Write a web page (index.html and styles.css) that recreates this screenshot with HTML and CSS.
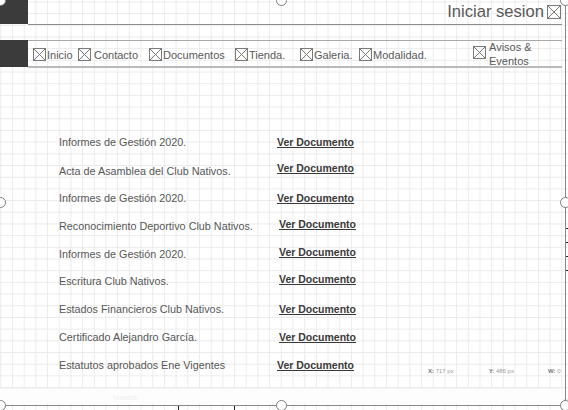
FILE: index.html
```html
<!DOCTYPE html>
<html lang="es">
<head>
<meta charset="utf-8">
<title>Documentos</title>
<link rel="stylesheet" href="styles.css">
</head>
<body>
<div class="stage">
  <div class="page">
    <header class="header">
      <div class="block"></div>
      <div class="header-main">
        <span class="login">Iniciar sesion</span>
        <svg class="ico ico-lg" viewBox="0 0 14 14"><rect x="0.5" y="0.5" width="13" height="13" fill="none" stroke="#7a7a7a"/><path d="M0.5 0.5L13.5 13.5M13.5 0.5L0.5 13.5" stroke="#7a7a7a" fill="none"/></svg>
      </div>
    </header>

    <nav class="nav">
      <div class="block block-nav"></div>
      <div class="nav-main">
        <a class="nav-item"><svg class="ico" viewBox="0 0 13 13"><rect x="0.5" y="0.5" width="12" height="12" fill="none" stroke="#7a7a7a"/><path d="M0.5 0.5L12.5 12.5M12.5 0.5L0.5 12.5" stroke="#7a7a7a" fill="none"/></svg><span>Inicio</span></a>
        <a class="nav-item"><svg class="ico" viewBox="0 0 13 13"><rect x="0.5" y="0.5" width="12" height="12" fill="none" stroke="#7a7a7a"/><path d="M0.5 0.5L12.5 12.5M12.5 0.5L0.5 12.5" stroke="#7a7a7a" fill="none"/></svg><span class="sp">Contacto</span></a>
        <a class="nav-item"><svg class="ico" viewBox="0 0 13 13"><rect x="0.5" y="0.5" width="12" height="12" fill="none" stroke="#7a7a7a"/><path d="M0.5 0.5L12.5 12.5M12.5 0.5L0.5 12.5" stroke="#7a7a7a" fill="none"/></svg><span>Documentos</span></a>
        <a class="nav-item"><svg class="ico" viewBox="0 0 13 13"><rect x="0.5" y="0.5" width="12" height="12" fill="none" stroke="#7a7a7a"/><path d="M0.5 0.5L12.5 12.5M12.5 0.5L0.5 12.5" stroke="#7a7a7a" fill="none"/></svg><span>Tienda.</span></a>
        <a class="nav-item"><svg class="ico" viewBox="0 0 13 13"><rect x="0.5" y="0.5" width="12" height="12" fill="none" stroke="#7a7a7a"/><path d="M0.5 0.5L12.5 12.5M12.5 0.5L0.5 12.5" stroke="#7a7a7a" fill="none"/></svg><span>Galeria.</span></a>
        <a class="nav-item"><svg class="ico" viewBox="0 0 13 13"><rect x="0.5" y="0.5" width="12" height="12" fill="none" stroke="#7a7a7a"/><path d="M0.5 0.5L12.5 12.5M12.5 0.5L0.5 12.5" stroke="#7a7a7a" fill="none"/></svg><span>Modalidad.</span></a>
        <a class="nav-item nav-item-2l"><svg class="ico ico-top" viewBox="0 0 13 13"><rect x="0.5" y="0.5" width="12" height="12" fill="none" stroke="#7a7a7a"/><path d="M0.5 0.5L12.5 12.5M12.5 0.5L0.5 12.5" stroke="#7a7a7a" fill="none"/></svg><span class="two-line">Avisos &amp;<br>Eventos</span></a>
      </div>
    </nav>

    <ul class="docs">
      <li class="doc"><span class="doc-name">Informes de Gestión 2020.</span><a class="doc-link">Ver Documento</a></li>
      <li class="doc"><span class="doc-name doc-name-low">Acta de Asamblea del Club Nativos.</span><a class="doc-link doc-link-up">Ver Documento</a></li>
      <li class="doc"><span class="doc-name">Informes de Gestión 2020.</span><a class="doc-link">Ver Documento</a></li>
      <li class="doc"><span class="doc-name">Reconocimiento Deportivo Club Nativos.</span><a class="doc-link doc-link-r doc-link-up">Ver Documento</a></li>
      <li class="doc"><span class="doc-name">Informes de Gestión 2020.</span><a class="doc-link doc-link-r doc-link-up">Ver Documento</a></li>
      <li class="doc"><span class="doc-name">Escritura Club Nativos.</span><a class="doc-link doc-link-r doc-link-up">Ver Documento</a></li>
      <li class="doc"><span class="doc-name">Estados Financieros Club Nativos.</span><a class="doc-link doc-link-r">Ver Documento</a></li>
      <li class="doc"><span class="doc-name">Certificado Alejandro García.</span><a class="doc-link doc-link-r">Ver Documento</a></li>
      <li class="doc"><span class="doc-name">Estatutos aprobados Ene Vigentes</span><a class="doc-link">Ver Documento</a></li>
    </ul>
  </div>

  <div class="band"><span class="band-label">Nombre</span></div>

  <div class="coords">
    <span class="coord c-x"><b>X:</b> 717 px</span>
    <span class="coord c-y"><b>Y:</b> 486 px</span>
    <span class="coord c-w"><b>W:</b> 0</span>
  </div>

  <div class="selection"></div>
  <span class="handle h-tl"></span>
  <span class="handle h-tc"></span>
  <span class="handle h-tr"></span>
  <span class="handle h-ml"></span>
  <span class="handle h-mr"></span>
  <span class="handle h-bl"></span>
  <span class="handle h-bc"></span>
  <span class="handle h-br"></span>
  <span class="tick tick-b1"></span>
  <span class="tick tick-b2"></span>
  <span class="tick tick-r tick-r1"></span>
  <span class="tick tick-r tick-r2"></span>
  <span class="tick tick-r tick-r3"></span>
  <span class="tick tick-r tick-r4"></span>
</div>
</body>
</html>
```

FILE: styles.css
```css
* { box-sizing: border-box; }

html, body {
  margin: 0;
  padding: 0;
  background: #ffffff;
}

body {
  width: 568px;
  height: 410px;
  overflow: hidden;
  font-family: "Liberation Sans", Arial, sans-serif;
  color: #555555;
}

.stage {
  position: relative;
  width: 568px;
  height: 410px;
  background-color: #ffffff;
  background-image:
    linear-gradient(to right, #ebebeb 1px, transparent 1px),
    linear-gradient(to bottom, #ebebeb 1px, transparent 1px);
  background-size: 11.7px 11.7px;
  background-position: 0.3px 1.4px;
  background-repeat: repeat;
  overflow: hidden;
}

.page {
  width: 562px;
  display: flex;
  flex-direction: column;
}

/* header */
.header {
  display: flex;
  height: 25px;
}

.block {
  width: 28px;
  height: 24px;
  background: #3b3b3b;
  flex: none;
}

.header-main {
  flex: 1;
  display: flex;
  justify-content: flex-end;
  align-items: center;
  border-bottom: 1px solid #8c8c8c;
  padding-right: 1px;
  padding-bottom: 1px;
}

.login {
  font-size: 16.6px;
  color: #585858;
  margin-right: 3px;
}

.ico {
  width: 13px;
  height: 13px;
  flex: none;
  display: block;
}

.ico-lg {
  width: 14px;
  height: 14px;
}

/* nav */
.nav {
  display: flex;
  margin-top: 15px;
  height: 28px;
}

.block-nav {
  height: 27px;
}

.nav-main {
  flex: 1;
  display: grid;
  grid-template-columns: 45px 71px 86px 65px 59px 114px auto;
  align-items: center;
  padding-left: 5px;
  border-top: 1px solid #a9a9a9;
  border-bottom: 2px solid #b9b9b9;
}

.nav-item {
  display: flex;
  align-items: center;
  font-size: 11px;
  color: #5a5a5a;
}

.nav-item .ico {
  margin-right: 1px;
}

.nav-item .sp {
  margin-left: 2px;
}

.nav-item-2l {
  align-items: flex-start;
  align-self: start;
}

.ico-top {
  margin-top: 5px;
}

.two-line {
  margin-left: 2px;
  line-height: 14px;
  margin-top: -1px;
}

/* list */
.docs {
  list-style: none;
  margin: 60px 0 0 0;
  padding: 0 0 0 59px;
}

.doc {
  display: grid;
  grid-template-columns: 218px auto;
  align-items: center;
  height: 27.9px;
}

.doc-name {
  font-size: 10.8px;
  color: #575757;
}

.doc-name-low {
  margin-top: 3px;
}

.doc-link {
  font-size: 10.5px;
  font-weight: bold;
  color: #3a3a3a;
  text-decoration: underline;
  text-underline-offset: 1px;
}

.doc-link-r {
  margin-left: 2px;
}

.doc-link-up {
  margin-top: -4px;
}

/* editor chrome */
.band {
  position: absolute;
  left: 0;
  top: 388px;
  width: 563px;
  height: 16px;
  background: #fdfdfd;
  border-top: 1px solid #f4f4f4;
}

.band-label {
  position: absolute;
  left: 113px;
  top: 5px;
  font-size: 7px;
  color: #eeeeee;
}

.coords {
  position: absolute;
  top: 368px;
  left: 428px;
  display: flex;
  font-size: 6px;
  color: #9a9a9a;
}

.coord b {
  color: #777;
}

.c-y { margin-left: 35px; }
.c-w { margin-left: 34px; }

.selection {
  position: absolute;
  left: 0;
  top: 0;
  width: 566px;
  height: 406px;
  border-right: 1.5px solid #878787;
  border-bottom: 1.5px solid #878787;
  pointer-events: none;
}

.handle {
  position: absolute;
  width: 11px;
  height: 11px;
  border-radius: 50%;
  border: 1.5px solid #7d7d7d;
  background: #ffffff;
  margin-left: -5.5px;
  margin-top: -5.5px;
}

.h-tl { left: 0; top: 0; }
.h-tc { left: 281px; top: 0; }
.h-tr { left: 565px; top: 0; }
.h-ml { left: 0; top: 202px; }
.h-mr { left: 565px; top: 202px; }
.h-bl { left: 0; top: 405px; }
.h-bc { left: 281px; top: 405px; }
.h-br { left: 565px; top: 405px; }

.tick {
  position: absolute;
  background: #222;
}

.tick-b1, .tick-b2 {
  top: 406px;
  width: 1px;
  height: 5px;
}

.tick-b1 { left: 178px; }
.tick-b2 { left: 234px; }

.tick-r {
  left: 566px;
  width: 3px;
  height: 1px;
}

.tick-r1 { top: 228px; }
.tick-r2 { top: 242px; }
.tick-r3 { top: 256px; }
.tick-r4 { top: 270px; }
```
